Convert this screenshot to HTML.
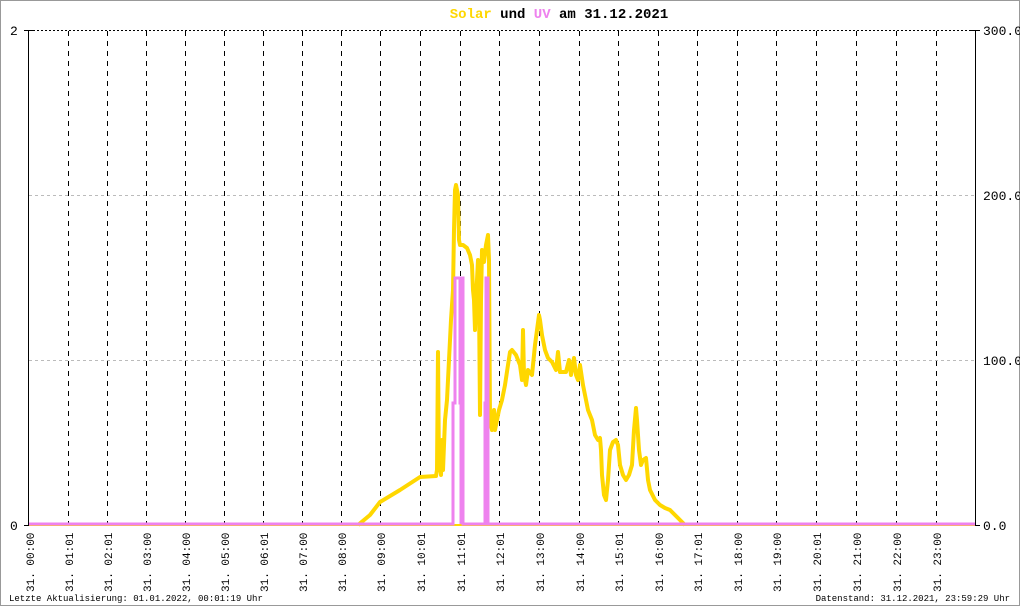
<!DOCTYPE html>
<html><head><meta charset="utf-8"><style>
html,body{margin:0;padding:0;background:#fff}
svg{display:block}
text{font-family:"Liberation Mono","DejaVu Sans Mono",monospace}
</style></head><body>
<svg width="1020" height="606" viewBox="0 0 1020 606" xmlns="http://www.w3.org/2000/svg">
<rect x="0.5" y="0.5" width="1019" height="605" fill="#fff" stroke="#999"/>
<text x="559" y="18" font-size="14" font-weight="bold" text-anchor="middle"><tspan fill="#ffd700">Solar</tspan> und <tspan fill="#ee82ee">UV</tspan> am 31.12.2021</text>
<line x1="29" y1="30.5" x2="975" y2="30.5" stroke="#000" stroke-dasharray="2,2"/>
<line x1="29" y1="195.5" x2="975" y2="195.5" stroke="#bbb" stroke-dasharray="3,3"/>
<line x1="29" y1="360.5" x2="975" y2="360.5" stroke="#bbb" stroke-dasharray="3,3"/>
<g stroke="#000" stroke-dasharray="5,5">
<line x1="68.5" y1="31" x2="68.5" y2="525"/><line x1="107.5" y1="31" x2="107.5" y2="525"/><line x1="146.5" y1="31" x2="146.5" y2="525"/><line x1="185.5" y1="31" x2="185.5" y2="525"/><line x1="224.5" y1="31" x2="224.5" y2="525"/><line x1="263.5" y1="31" x2="263.5" y2="525"/><line x1="302.5" y1="31" x2="302.5" y2="525"/><line x1="341.5" y1="31" x2="341.5" y2="525"/><line x1="380.5" y1="31" x2="380.5" y2="525"/><line x1="420.5" y1="31" x2="420.5" y2="525"/><line x1="460.5" y1="31" x2="460.5" y2="525"/><line x1="499.5" y1="31" x2="499.5" y2="525"/><line x1="539.5" y1="31" x2="539.5" y2="525"/><line x1="579.5" y1="31" x2="579.5" y2="525"/><line x1="618.5" y1="31" x2="618.5" y2="525"/><line x1="658.5" y1="31" x2="658.5" y2="525"/><line x1="697.5" y1="31" x2="697.5" y2="525"/><line x1="737.5" y1="31" x2="737.5" y2="525"/><line x1="776.5" y1="31" x2="776.5" y2="525"/><line x1="816.5" y1="31" x2="816.5" y2="525"/><line x1="856.5" y1="31" x2="856.5" y2="525"/><line x1="896.5" y1="31" x2="896.5" y2="525"/><line x1="936.5" y1="31" x2="936.5" y2="525"/>
</g>
<line x1="28.5" y1="30" x2="28.5" y2="526" stroke="#000"/>
<line x1="975.5" y1="30" x2="975.5" y2="526" stroke="#000"/>
<line x1="24" y1="30.5" x2="33" y2="30.5" stroke="#000"/>
<line x1="24" y1="525.5" x2="33" y2="525.5" stroke="#000"/>
<line x1="971" y1="30.5" x2="980" y2="30.5" stroke="#000"/>
<line x1="975" y1="525.5" x2="980" y2="525.5" stroke="#000"/>
<text x="10" y="35" font-size="13">2</text>
<text x="10" y="530" font-size="13">0</text>
<text x="983" y="35" font-size="13">300.0</text>
<text x="983" y="200" font-size="13">200.0</text>
<text x="983" y="365" font-size="13">100.0</text>
<text x="983" y="530" font-size="13">0.0</text>
<line x1="29" y1="525" x2="975" y2="525" stroke="#ffd700" stroke-width="2"/>
<polyline fill="none" stroke="#ffd700" stroke-width="4" stroke-linejoin="round" points="358,525 370,515 380,502 400,490 420,477 436,476 437,470 438,352 439,470 440,460 441,475 442,440 443,470 444,445 445,420 447,400 449,360 451,320 453,290 454,230 455,190 456,185 458,195 459,240 460,245 463,245 467,248 470,255 472,265 473,290 474,300 475,330 476,300 478,260 479,300 480,415 481,300 482,250 484,262 486,245 488,235 489,260 490,420 492,430 494,410 495,430 497,420 499,410 502,400 505,385 508,365 510,352 512,350 516,355 520,365 522,380 523,330 524,375 526,385 528,370 532,375 535,345 537,330 539,315 540,320 542,335 545,350 548,358 552,362 556,370 558,352 560,372 566,372 569,360 571,375 574,358 576,375 578,380 580,365 583,385 586,400 588,410 592,420 595,435 598,440 600,438 601,450 602,475 604,495 606,500 608,480 610,450 613,442 616,440 618,445 620,465 623,475 626,480 629,475 632,465 634,430 636,408 637,420 639,450 641,465 643,460 646,458 648,480 650,490 655,500 660,505 665,508 670,510 675,515 680,520 685,525"/>
<polyline fill="none" stroke="#ee82ee" stroke-width="3" points="29,524 453,524 453,403 455,403 455,278 460,278 460,403 461,403 461,524 461,278 463,278 463,524 485,524 485,403 486,403 486,278 488,278 488,524 975,524"/>
<g font-size="11" fill="#000">
<text transform="translate(34,592) rotate(-90)">31. 00:00</text>
<text transform="translate(73,592) rotate(-90)">31. 01:01</text>
<text transform="translate(112,592) rotate(-90)">31. 02:01</text>
<text transform="translate(151,592) rotate(-90)">31. 03:00</text>
<text transform="translate(190,592) rotate(-90)">31. 04:00</text>
<text transform="translate(229,592) rotate(-90)">31. 05:00</text>
<text transform="translate(268,592) rotate(-90)">31. 06:01</text>
<text transform="translate(307,592) rotate(-90)">31. 07:00</text>
<text transform="translate(346,592) rotate(-90)">31. 08:00</text>
<text transform="translate(385,592) rotate(-90)">31. 09:00</text>
<text transform="translate(425,592) rotate(-90)">31. 10:01</text>
<text transform="translate(465,592) rotate(-90)">31. 11:01</text>
<text transform="translate(504,592) rotate(-90)">31. 12:01</text>
<text transform="translate(544,592) rotate(-90)">31. 13:00</text>
<text transform="translate(584,592) rotate(-90)">31. 14:00</text>
<text transform="translate(623,592) rotate(-90)">31. 15:01</text>
<text transform="translate(663,592) rotate(-90)">31. 16:00</text>
<text transform="translate(702,592) rotate(-90)">31. 17:01</text>
<text transform="translate(742,592) rotate(-90)">31. 18:00</text>
<text transform="translate(781,592) rotate(-90)">31. 19:00</text>
<text transform="translate(821,592) rotate(-90)">31. 20:01</text>
<text transform="translate(861,592) rotate(-90)">31. 21:00</text>
<text transform="translate(901,592) rotate(-90)">31. 22:00</text>
<text transform="translate(941,592) rotate(-90)">31. 23:00</text>
</g>
<text x="9" y="601" font-size="9">Letzte Aktualisierung: 01.01.2022, 00:01:19 Uhr</text>
<text x="1010" y="601" font-size="9" text-anchor="end">Datenstand: 31.12.2021, 23:59:29 Uhr</text>
</svg>
</body></html>
